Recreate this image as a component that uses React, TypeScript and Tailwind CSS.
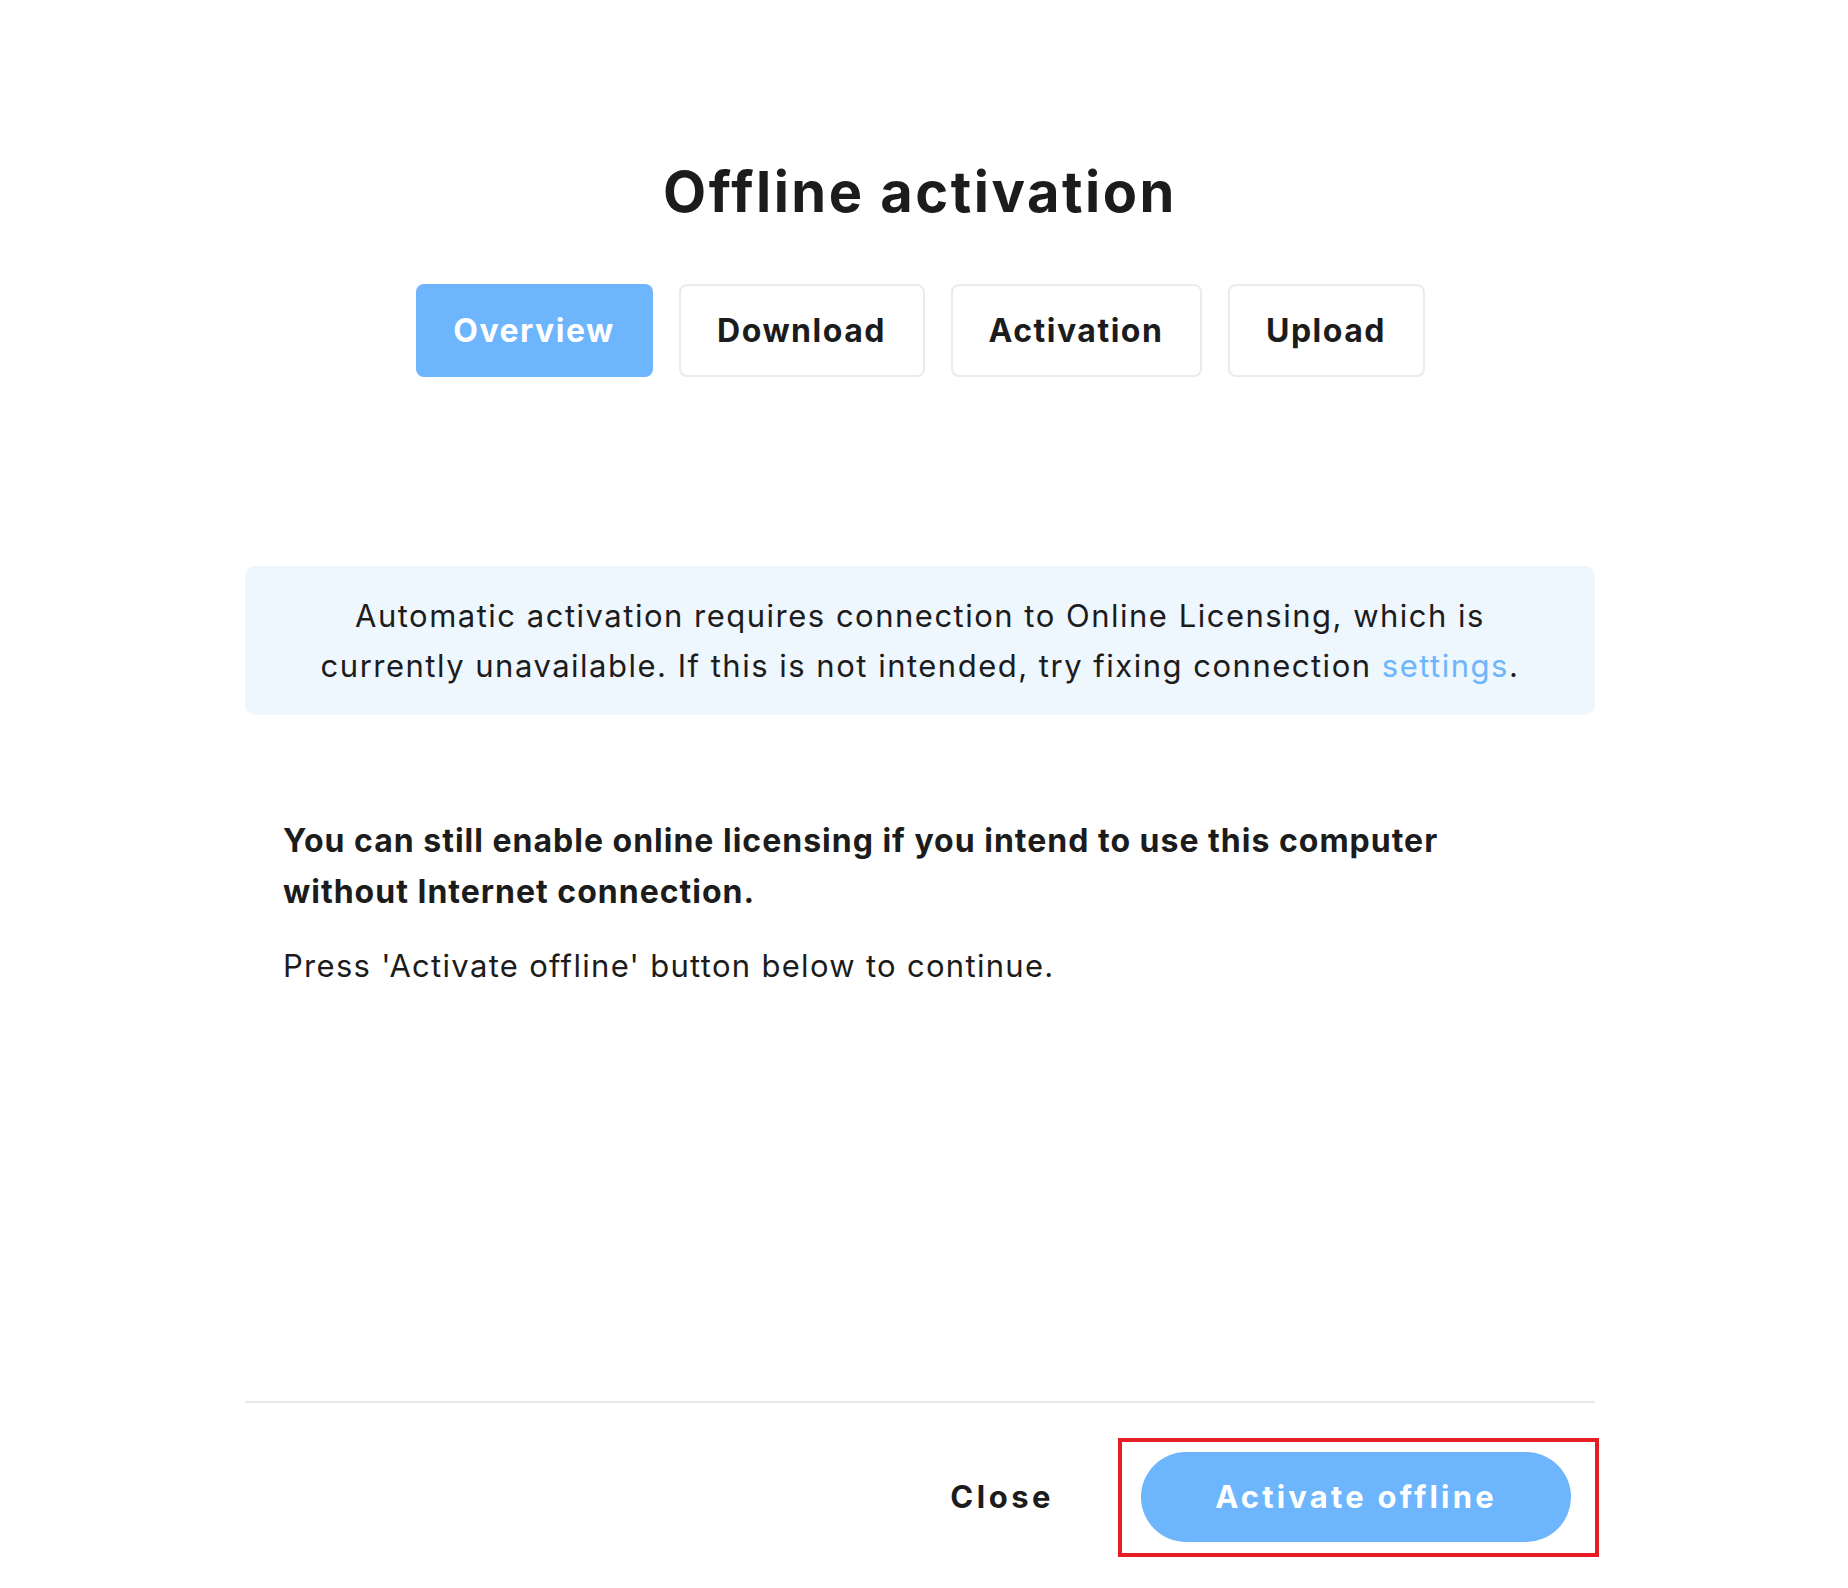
import React from "react";

const font = { fontFamily: "Inter, 'Noto Sans', sans-serif" };

export default function App() {
  const tabs = [
    { label: "Overview", w: "w-[237px]", active: true },
    { label: "Download", w: "w-[246px]", active: false },
    { label: "Activation", w: "w-[251px]", active: false },
    { label: "Upload", w: "w-[197px]", active: false },
  ];
  return (
    <div className="min-h-[1588px] w-[1848px] bg-white text-[#1c1c1c]" style={font}>
      <div className="ml-[245px] flex w-[1350px] flex-col">
        <h1 className="mt-[150px] text-center text-[56px] font-bold leading-[84px] tracking-[2.5px]">
          Offline activation
        </h1>
        <div className="mt-[50px] flex justify-center gap-[26px]">
          {tabs.map((t) => (
            <div
              key={t.label}
              className={`flex h-[93px] items-center justify-center rounded-[8px] text-[32px] font-bold tracking-[1.5px] ${t.w} ${
                t.active ? "bg-[#6db5fc] text-white" : "border-2 border-[#ebebeb] bg-white text-[#1c1c1c]"
              }`}
            >
              {t.label}
            </div>
          ))}
        </div>
        <div className="mt-[189px] flex h-[149px] items-center justify-center rounded-[10px] bg-[#eef6fe] px-[20px] text-center text-[31px] leading-[50px] tracking-[1.5px]">
          <p>
            Automatic activation requires connection to Online Licensing, which is
            <br />
            currently unavailable. If this is not intended, try fixing connection{" "}
            <span className="text-[#6db5fc]">settings</span>.
          </p>
        </div>
        <div className="mt-[100px] px-[38px]">
          <p className="text-[32px] font-bold leading-[51px] tracking-[1px]">
            You can still enable online licensing if you intend to use this computer
            <br />
            without Internet connection.
          </p>
          <p className="mt-[24px] text-[31px] leading-[50px] tracking-[1.3px]">
            Press 'Activate offline' button below to continue.
          </p>
        </div>
        <div className="mt-[410px] h-[2px] bg-[#e8e8e8]" />
        <div className="mr-[-4px] mt-[35px] flex items-center justify-end gap-[64px]">
          <button className="text-[31px] font-bold tracking-[3.5px] text-[#1c1c1c]">Close</button>
          <div className="border-[4px] border-[#e81c24] pb-[11px] pl-[19px] pr-[24px] pt-[10px]">
            <button className="flex h-[90px] w-[430px] items-center justify-center rounded-full bg-[#6db5fc] text-[31px] font-bold tracking-[3.2px] text-white">
              Activate offline
            </button>
          </div>
        </div>
      </div>
    </div>
  );
}
